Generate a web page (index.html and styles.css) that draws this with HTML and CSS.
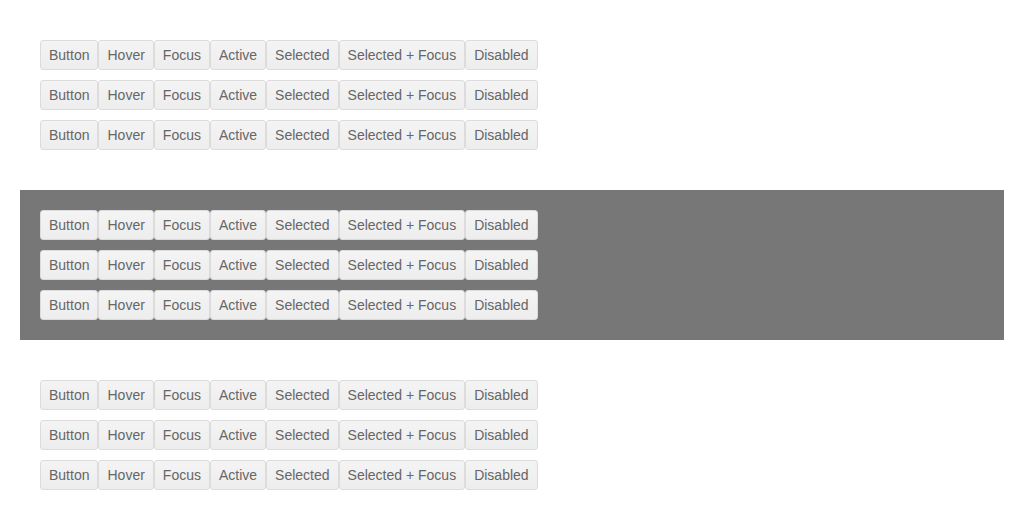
FILE: index.html
```html
<!DOCTYPE html>
<html>
<head>
<meta charset="utf-8">
<link rel="stylesheet" href="styles.css">
</head>
<body>
<section class="panel">
  <div class="row"><button class="btn">Button</button><button class="btn">Hover</button><button class="btn">Focus</button><button class="btn">Active</button><button class="btn">Selected</button><button class="btn">Selected + Focus</button><button class="btn">Disabled</button></div>
  <div class="row"><button class="btn">Button</button><button class="btn">Hover</button><button class="btn">Focus</button><button class="btn">Active</button><button class="btn">Selected</button><button class="btn">Selected + Focus</button><button class="btn">Disabled</button></div>
  <div class="row"><button class="btn">Button</button><button class="btn">Hover</button><button class="btn">Focus</button><button class="btn">Active</button><button class="btn">Selected</button><button class="btn">Selected + Focus</button><button class="btn">Disabled</button></div>
</section>
<section class="panel dark">
  <div class="row"><button class="btn">Button</button><button class="btn">Hover</button><button class="btn">Focus</button><button class="btn">Active</button><button class="btn">Selected</button><button class="btn">Selected + Focus</button><button class="btn">Disabled</button></div>
  <div class="row"><button class="btn">Button</button><button class="btn">Hover</button><button class="btn">Focus</button><button class="btn">Active</button><button class="btn">Selected</button><button class="btn">Selected + Focus</button><button class="btn">Disabled</button></div>
  <div class="row"><button class="btn">Button</button><button class="btn">Hover</button><button class="btn">Focus</button><button class="btn">Active</button><button class="btn">Selected</button><button class="btn">Selected + Focus</button><button class="btn">Disabled</button></div>
</section>
<section class="panel">
  <div class="row"><button class="btn">Button</button><button class="btn">Hover</button><button class="btn">Focus</button><button class="btn">Active</button><button class="btn">Selected</button><button class="btn">Selected + Focus</button><button class="btn">Disabled</button></div>
  <div class="row"><button class="btn">Button</button><button class="btn">Hover</button><button class="btn">Focus</button><button class="btn">Active</button><button class="btn">Selected</button><button class="btn">Selected + Focus</button><button class="btn">Disabled</button></div>
  <div class="row"><button class="btn">Button</button><button class="btn">Hover</button><button class="btn">Focus</button><button class="btn">Active</button><button class="btn">Selected</button><button class="btn">Selected + Focus</button><button class="btn">Disabled</button></div>
</section>
</body>
</html>
```
FILE: styles.css
```css
html, body {
  margin: 0;
  background: #fff;
}
body {
  padding: 20px;
  display: flex;
  flex-direction: column;
  gap: 20px;
  font-family: "Liberation Sans", Arial, sans-serif;
}
.panel {
  padding: 20px;
  display: flex;
  flex-direction: column;
  gap: 10px;
}
.dark {
  background: #777777;
}
.row {
  display: flex;
}
.btn {
  margin: 0;
  height: 30px;
  padding: 4px 8px;
  border: 1px solid #dcdcdc;
  border-radius: 3px;
  background: linear-gradient(#f4f4f4, #ededed);
  color: #666;
  font-family: "Liberation Sans", Arial, sans-serif;
  font-size: 14px;
  line-height: 20px;
  box-sizing: border-box;
}
```
